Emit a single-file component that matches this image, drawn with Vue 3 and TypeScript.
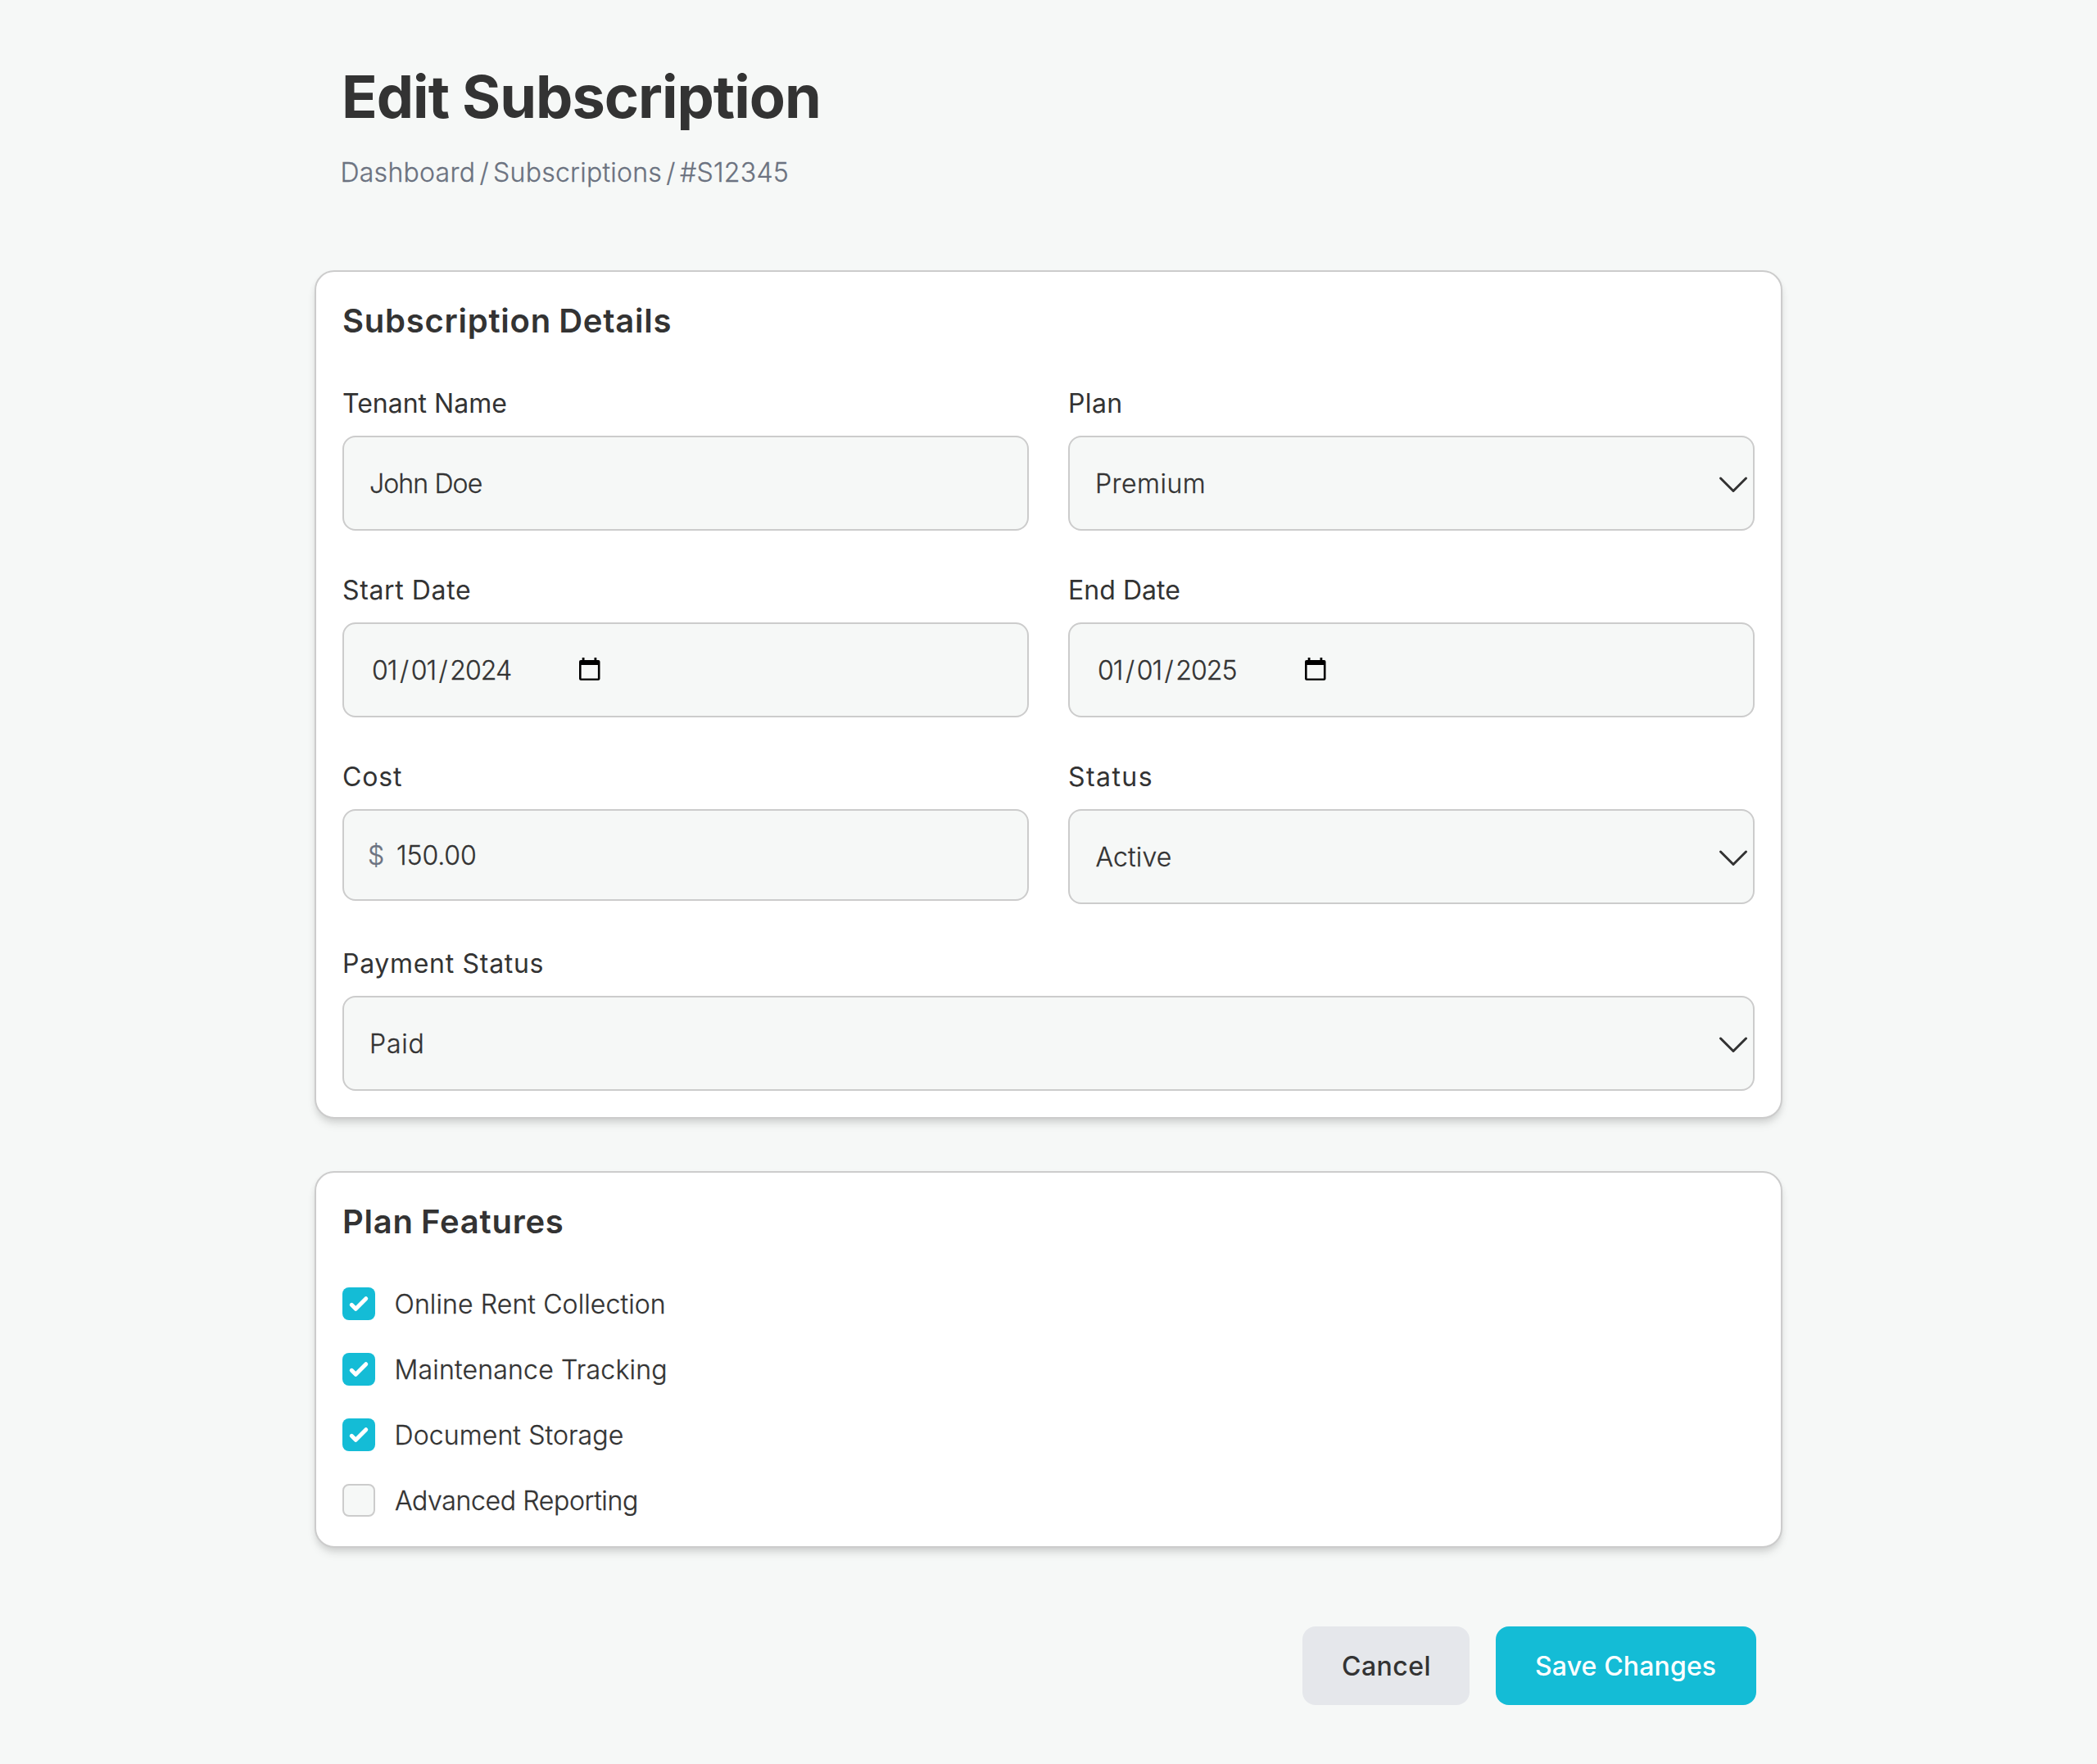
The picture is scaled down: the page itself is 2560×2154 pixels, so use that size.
<script setup lang="ts">
type FieldKind = 'text' | 'select' | 'date' | 'money'

interface TextFit {
  track: number
  shift: number
}

interface Field {
  label: string
  labelFit: TextFit
  kind: FieldKind
  value: string
  fit: TextFit
  wide?: boolean
}

interface Feature {
  label: string
  checked: boolean
  fit: TextFit
}

const fit = (track: number, shift = 0): TextFit => ({ track, shift })

const textStyle = (f: TextFit) => ({
  letterSpacing: `${f.track}px`,
  marginLeft: `${f.shift}px`,
})

// Splits a date so its separators can carry their own spacing.
const parts = (field: Field): string[] =>
  field.kind === 'date' ? field.value.split(/(\/)/) : [field.value]

const fields: Field[] = [
  { label: 'Tenant Name', labelFit: fit(0), kind: 'text', value: 'John Doe', fit: fit(-0.87, 1) },
  { label: 'Plan', labelFit: fit(0.37), kind: 'select', value: 'Premium', fit: fit(0.48, 1) },
  { label: 'Start Date', labelFit: fit(0.62), kind: 'date', value: '01/01/2024', fit: fit(-0.96, 4) },
  { label: 'End Date', labelFit: fit(0.04), kind: 'date', value: '01/01/2025', fit: fit(-0.96, 4) },
  { label: 'Cost', labelFit: fit(0.83), kind: 'money', value: '150.00', fit: fit(-0.1) },
  { label: 'Status', labelFit: fit(1.44), kind: 'select', value: 'Active', fit: fit(0.16, 1.5) },
  { label: 'Payment Status', labelFit: fit(0.7), kind: 'select', value: 'Paid', fit: fit(0.8, 1) },
]
fields[fields.length - 1].wide = true

const features: Feature[] = [
  { label: 'Online Rent Collection', checked: true, fit: fit(0.12, -0.5) },
  { label: 'Maintenance Tracking', checked: true, fit: fit(0.2, -0.5) },
  { label: 'Document Storage', checked: true, fit: fit(0.12, -0.5) },
  { label: 'Advanced Reporting', checked: false, fit: fit(-0.35) },
]
</script>

<template>
  <main class="page">
    <header class="header">
      <h1 class="title">Edit Subscription</h1>
      <nav class="crumbs">Dashboard / Subscriptions / #S12345</nav>
    </header>

    <section class="card">
      <h2 class="card-title">Subscription Details</h2>
      <div class="grid">
        <div v-for="field in fields" :key="field.label" class="field" :class="{ wide: field.wide }">
          <div class="label"><span :style="textStyle(field.labelFit)">{{ field.label }}</span></div>
          <div class="control" :class="field.kind">
            <span v-if="field.kind === 'money'" class="currency">$</span>
            <span class="value" :style="textStyle(field.fit)"><span v-for="(part, i) in parts(field)" :key="i" :class="{ sep: part === '/' }">{{ part }}</span></span>
            <svg v-if="field.kind === 'date'" class="calendar" viewBox="0 0 26 28" width="26" height="28">
              <path
                fill="#000"
                fill-rule="evenodd"
                d="M3.7 0h2.8v3h12V0h2.8v3h2.2a2 2 0 0 1 2 2v20.7a2 2 0 0 1-2 2h-21.5a2 2 0 0 1-2-2V5a2 2 0 0 1 2-2h1.7zM2.6 9v16.4h20.3V9z"
              />
            </svg>
            <svg v-if="field.kind === 'select'" class="chevron" viewBox="0 0 40 40" width="40" height="40">
              <path
                d="M4.5 12 20 27.5 35.5 12"
                fill="none"
                stroke="#333"
                stroke-width="3"
                stroke-linecap="round"
                stroke-linejoin="round"
              />
            </svg>
          </div>
        </div>
      </div>
    </section>

    <section class="card">
      <h2 class="card-title">Plan Features</h2>
      <ul class="features">
        <li v-for="feature in features" :key="feature.label" class="feature">
          <span class="box" :class="{ on: feature.checked }">
            <svg v-if="feature.checked" viewBox="0 0 16 16" width="40" height="40">
              <path
                fill="#fff"
                d="M12.207 4.793a1 1 0 0 1 0 1.414l-5 5a1 1 0 0 1-1.414 0l-2-2a1 1 0 0 1 1.414-1.414L6.5 9.086l4.293-4.293a1 1 0 0 1 1.414 0z"
              />
            </svg>
          </span>
          <span class="value" :style="textStyle(feature.fit)">{{ feature.label }}</span>
        </li>
      </ul>
    </section>

    <footer class="actions">
      <button type="button" class="btn cancel">Cancel</button>
      <button type="button" class="btn save">Save Changes</button>
    </footer>
  </main>
</template>

<style>
body {
  background: #f6f8f7;
}
</style>

<style scoped>
.page {
  box-sizing: border-box;
  width: 1792px;
  min-height: 2154px;
  margin: 0 auto;
  padding-top: 64px;
  display: flex;
  flex-direction: column;
  color: #333;
  font-family: Inter, 'Noto Sans', sans-serif;
  font-size: 32px;
  line-height: 48px;
}

.header {
  padding: 8px 32px 0;
  height: 258px;
}

.title {
  margin: 0 0 0 1px;
  font-size: 72px;
  line-height: 92px;
  font-weight: 700;
  letter-spacing: -1px;
}

.crumbs {
  margin: 23px 0 0 -0.5px;
  color: #6b7280;
  font-weight: 300;
  letter-spacing: 0.26px;
  word-spacing: -4px;
  -webkit-text-stroke: 0.3px currentColor;
}

.card {
  padding: 32px;
  background: #fff;
  border: 2px solid #ccc;
  border-radius: 24px;
  box-shadow: 0 8px 12px -2px rgba(0, 0, 0, 0.1), 0 4px 8px -2px rgba(0, 0, 0, 0.1);
}

.card + .card {
  margin-top: 64px;
}

.card-title {
  margin: 0 0 48px;
  font-size: 40px;
  line-height: 56px;
  font-weight: 600;
  letter-spacing: 0.75px;
  word-spacing: -1.5px;
}

.grid {
  display: grid;
  grid-template-columns: 1fr 1fr;
  gap: 48px;
}

.wide {
  grid-column: 1 / -1;
}

.label {
  height: 46px;
  padding-top: 2px;
  line-height: 46px;
  margin-bottom: 16px;
  font-weight: 400;
}

.control {
  box-sizing: border-box;
  height: 116px;
  padding: 0 4px 0 30px;
  display: flex;
  align-items: center;
  background: #f6f8f7;
  border: 2px solid #ccc;
  border-radius: 16px;
}

.control.money {
  height: 112px;
}

.value {
  padding-top: 2px;
  font-weight: 300;
  -webkit-text-stroke: 0.3px currentColor;
  white-space: nowrap;
}

.sep {
  padding: 0 3.5px;
}

.date .value {
  width: 253px;
}

.currency {
  width: 35px;
  margin-left: -1px;
  padding-top: 2px;
  color: #6b7280;
  font-weight: 300;
  -webkit-text-stroke: 0.3px currentColor;
}

.calendar {
  margin-top: -2px;
}

.chevron {
  margin-left: auto;
  margin-top: 4px;
}

.features {
  margin: 0;
  padding: 0;
  list-style: none;
  display: flex;
  flex-direction: column;
  gap: 32px;
}

.feature {
  height: 48px;
  display: flex;
  align-items: center;
  gap: 24px;
}

.box {
  box-sizing: border-box;
  width: 40px;
  height: 40px;
  flex: none;
  background: #f6f8f7;
  border: 2px solid #ccc;
  border-radius: 8px;
}

.box.on {
  border: 0;
  background: #14bcd6;
}

.box svg {
  display: block;
}

.actions {
  margin-top: 96px;
  padding-right: 32px;
  display: flex;
  justify-content: flex-end;
  gap: 32px;
}

.btn {
  height: 96px;
  padding: 2px 0 0 48px;
  border: 0;
  border-radius: 16px;
  font: inherit;
  font-weight: 500;
  text-align: left;
}

.cancel {
  width: 204px;
  background: #e5e7eb;
  color: #333;
  letter-spacing: 0.46px;
}

.save {
  width: 318px;
  background: #14bcd6;
  color: #fff;
  letter-spacing: 0.15px;
}
</style>
